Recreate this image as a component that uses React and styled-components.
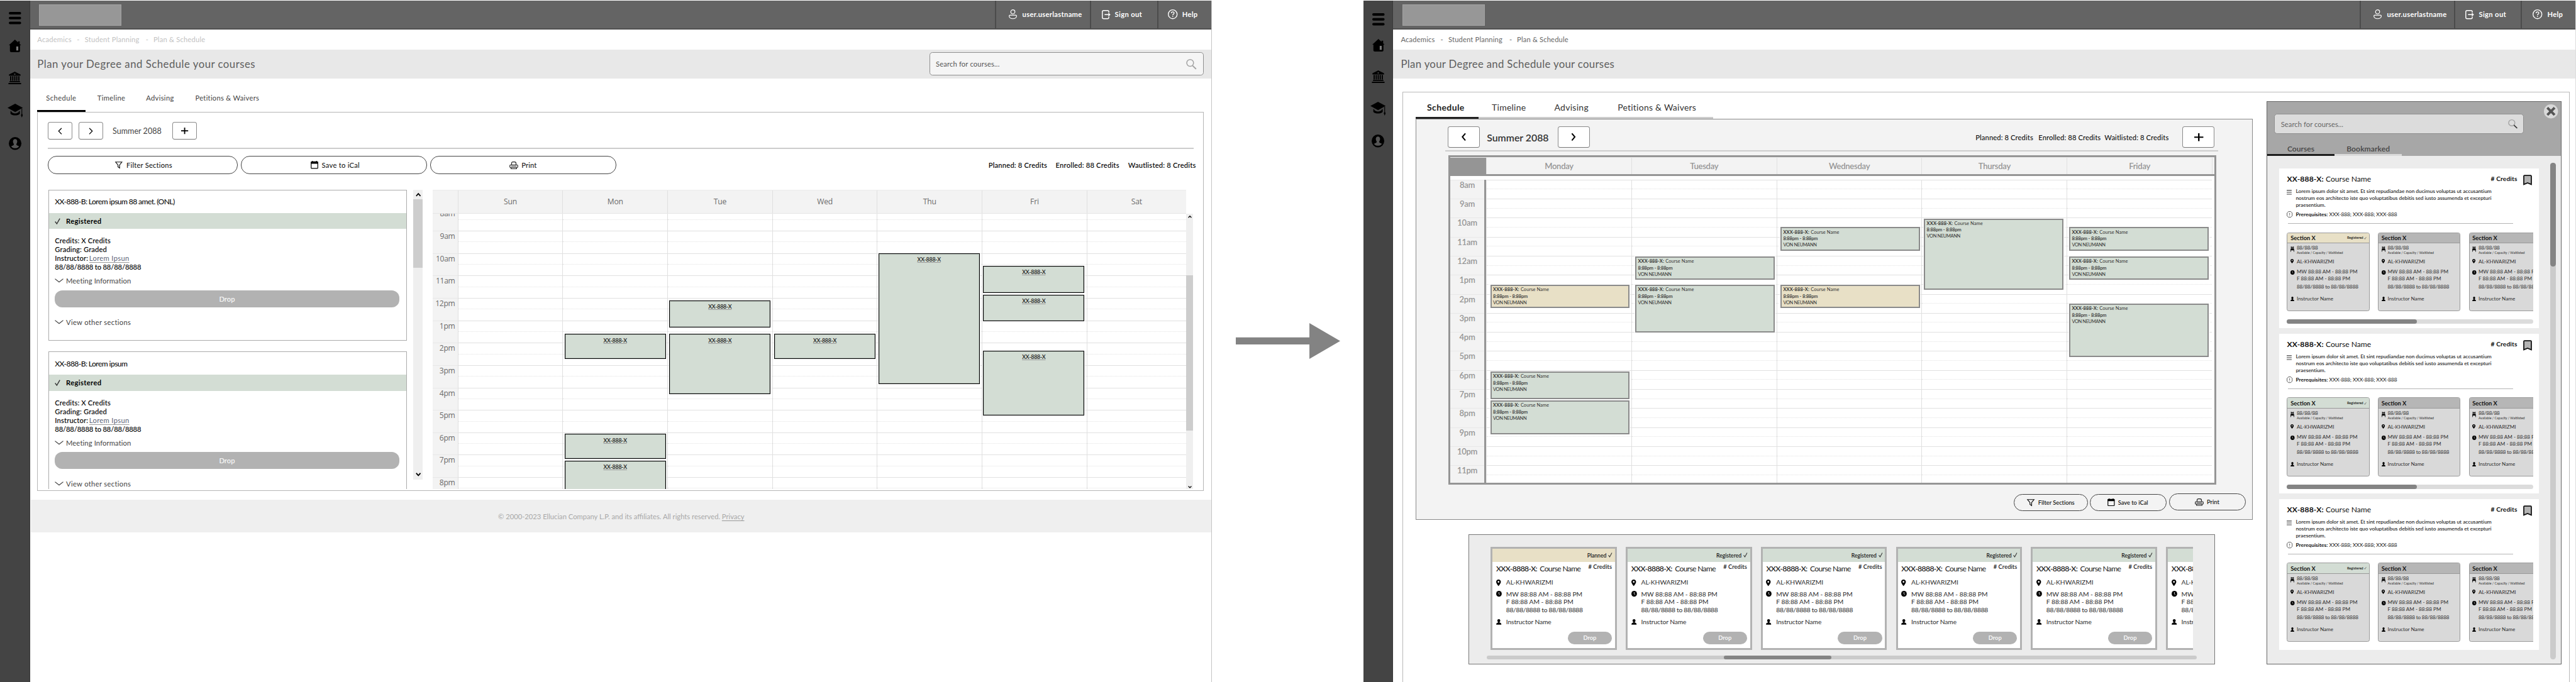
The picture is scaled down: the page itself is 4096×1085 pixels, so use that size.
import React from 'react';
import styled, { createGlobalStyle, css } from 'styled-components';

/* 10 design pixels = 1rem; the board is 439.2rem wide and always fills the window. */
const GlobalStyle = createGlobalStyle`
  *, *::before, *::after { box-sizing: border-box; }
  html { font-size: calc(100vw / 439.2); }
  body { margin: 0; background: #fff; overflow: hidden; }
`;

const sans = 'Lato, "Open Sans", sans-serif';
const calendarSans = '"Open Sans", "Noto Sans", sans-serif';
const green = '#d3ddd4';
const sand = '#e8e0c6';

/* ---------- shared pieces ---------- */

const Board = styled.div`
  display: flex;
  width: 439.2rem;
  height: 116.3rem;
  padding-top: 0.1rem;
  overflow: hidden;
  font-family: ${sans};
  color: #222;
`;

const Text = styled.span`
  flex: none;
  display: block;
  white-space: nowrap;
  font-size: ${(p) => p.$size / 10}rem;
  font-weight: ${(p) => p.$weight || 400};
  color: ${(p) => p.$color || 'inherit'};
  letter-spacing: ${(p) => p.$track || 0}em;
  ${(p) => p.$line && css`line-height: ${p.$line / 10}rem;`}
  ${(p) => p.$gap && css`margin-left: ${p.$gap / 10}rem;`}
  ${(p) => p.$width && css`width: ${p.$width / 10}rem;`}
  ${(p) => p.$underline && css`text-decoration: underline; text-decoration-color: #999; text-underline-offset: 0.15em; text-decoration-thickness: 1px;`}
`;

const CalendarText = styled(Text)`
  font-family: ${calendarSans};
`;

const CornerText = styled(Text)`
  align-self: flex-start;
  margin-left: auto;
`;

const Svg = styled.svg`
  flex: none;
  display: block;
  width: ${(p) => p.$w / 10}rem;
  height: ${(p) => p.$h / 10}rem;
  margin-left: ${(p) => (p.$gap || 0) / 10}rem;
  margin-top: ${(p) => (p.$drop || 0) / 10}rem;
  overflow: visible;
`;

const glyphs = {
  menu: ['0 0 22 22', <g fill="#000"><rect width="22" height="4.6" rx="2.3" /><rect y="8.7" width="22" height="4.6" rx="2.3" /><rect y="17.4" width="22" height="4.6" rx="2.3" /></g>],
  home: ['0 0 22 22', <g fill="#000"><path d="M11 0 0 10h2v9.5C2 21 3 22 4.5 22h13c1.5 0 2.5-1 2.5-2.5V10h2l-2.500-2.300V3h-3v2Z" /><rect x="13.300" y="12" width="3.600" height="7" fill="#777" /></g>],
  bank: ['0 0 24 22', <g fill="#000"><path fillRule="evenodd" d="M12 0 1.500 5v2h21V5ZM12 3a1.300 1.300 0 1 1 0 2.600A1.300 1.300 0 0 1 12 3Z" /><path d="M3.500 8h2.200v8H3.500zM7.200 8h2.200v8H7.200zM10.900 8h2.200v8h-2.200zM14.600 8h2.200v8h-2.200zM18.300 8h2.200v8h-2.200zM2.500 16.500h19v2h-19zM.5 19.800h23V22H.5z" /></g>],
  cap: ['0 0 26 24', <g fill="#000"><path d="M13 0 0 7l13 7.500L26 7Z" /><path d="M5 12.500v5c3.500 3.800 12.500 3.800 16 0v-5l-1.500.9c-1.500 4.600-11.500 4.600-13 0Z" /><path d="M23.800 8.500h1.200v9l1 2.500-1.600 4-1.600-4 1-2.500Z" /></g>],
  profile: ['0 0 22 22', <g><circle cx="11" cy="11" r="11" fill="#000" /><path d="M11 3.500c2.500 0 3.900 1.900 3.700 4.400-.1 2-.9 3-1.400 3.900-.4 1 .1 1.900 1 2.300 1.600.6 3 .9 3.500 1.900-1.700 2-4 3.100-6.800 3.100s-5.100-1.100-6.800-3.100c.5-1 1.900-1.300 3.500-1.900.9-.4 1.400-1.300 1-2.300-.5-.9-1.300-1.900-1.400-3.900C7.100 5.400 8.500 3.500 11 3.500Z" fill="#555" /></g>],
  user: ['0 0 14 17', <g fill="none" stroke="#fff" strokeWidth="1.3"><circle cx="7" cy="4.200" r="3.500" /><path d="M2.200 10h9.600c1 0 1.500.7 1.500 1.500 0 2.700-2.600 4.800-6.300 4.800S.7 14.200.7 11.500C.7 10.700 1.200 10 2.200 10Z" /></g>],
  signout: ['0 0 14 16', <g fill="none" stroke="#fff" strokeWidth="1.500"><path d="M11.500 4.500V3c0-1.300-.8-2.200-2-2.200H3C1.600.8.800 1.700.8 3v10c0 1.300.8 2.200 2.200 2.200h6.500c1.200 0 2-.9 2-2.200v-1.500M4.500 8h8.700M10.800 5.400 13.200 8l-2.400 2.600" /></g>],
  help: ['0 0 16 16', <g fill="none" stroke="#fff" strokeWidth="1.400"><circle cx="8" cy="8" r="7.300" /><path d="M5.800 6.300C5.800 5 6.700 4 8 4s2.300.9 2.300 2.100C10.300 7.700 8 7.700 8 9.600M8 11v1.500" /></g>],
  search: ['0 0 16 16', <g fill="none" strokeWidth="1.500"><circle cx="6.300" cy="6" r="5.300" stroke="#a3a3a3" /><path d="m10 10.200 5.500 5.300" stroke="currentColor" strokeWidth="1.900" /></g>],
  funnel: ['0 0 14 14', <path d="M1 1h12L8.600 6.800V13L5.500 10.500V6.800Z" fill="none" stroke="#111" strokeWidth="1.400" />],
  calendar: ['0 0 14 14', <g><rect x=".9" y="1.600" width="12.200" height="11.700" rx="1" fill="none" stroke="#000" strokeWidth="1.400" /><path d="M.5 1.500h2V0H4v1.500h6V0h1.500v1.500h2V5H.5Z" fill="#000" /></g>],
  printer: ['0 0 16 15', <g fill="none" stroke="#222" strokeWidth="1.300"><path d="M4 6.500V3.500C4 1.600 5 .8 6.500.8h3c1.500 0 2.500.8 2.500 2.700v3" /><path d="M2.300 6.500h11.400c.9 0 1.500.6 1.500 1.500v2.500c0 .8-.5 1.200-1.200 1.200H2c-.7 0-1.200-.4-1.200-1.200V8c0-.9.600-1.500 1.500-1.500ZM3 9h10M3 11.700v2.500h10v-2.500" /></g>],
  left: ['0 0 8 14', <path d="M6.800 1 1.500 7l5.300 6" fill="none" stroke="#000" strokeWidth="1.600" />],
  right: ['0 0 8 14', <path d="m1.200 1 5.300 6-5.300 6" fill="none" stroke="#000" strokeWidth="1.600" />],
  leftBold: ['0 0 9 13', <path d="m7 1-4.500 5.500L7 12" fill="none" stroke="#000" strokeWidth="2.200" strokeLinecap="round" />],
  rightBold: ['0 0 9 13', <path d="m2 1 4.500 5.500L2 12" fill="none" stroke="#000" strokeWidth="2.200" strokeLinecap="round" />],
  plus: ['0 0 14 14', <path d="M7 0v14M0 7h14" stroke="#000" strokeWidth="2.300" />],
  chevron: ['0 0 15 8', <path d="m.5.7 7 6.300 7-6.300" fill="none" stroke="#444" strokeWidth="1.400" />],
  check: ['0 0 10 11', <path d="m.8 6.200 3 4L9.200.6" fill="none" stroke="#333" strokeWidth="1.600" />],
  up: ['0 0 10 6', <path d="m1 5.200 4-4 4 4" fill="none" stroke="#000" strokeWidth="2" />],
  down: ['0 0 10 6', <path d="m1 .8 4 4 4-4" fill="none" stroke="#000" strokeWidth="2" />],
  pin: ['0 0 8 11', <path fillRule="evenodd" d="M4 0C1.700 0 0 1.700 0 3.900 0 6.500 4 11 4 11s4-4.500 4-7.100C8 1.700 6.300 0 4 0Zm0 2.400a1.500 1.500 0 1 1 0 3 1.500 1.500 0 0 1 0-3Z" fill="#000" />],
  clock: ['0 0 10 10', <g><circle cx="5" cy="5" r="5" fill="#000" /><path d="M5 2.200v3l1.600 1.700" fill="none" stroke="#eee" strokeWidth="1" /></g>],
  person: ['0 0 10 10', <g fill="#000"><circle cx="5" cy="2.900" r="2.800" /><path d="M3.800 5h2.400l.3 1.300c2 .3 3.200 1 3.400 3.700H.1C.3 7.300 1.500 6.600 3.500 6.300Z" /></g>],
  chair: ['0 0 7 9', <path d="M.8 0h1v.7h3.400V0h1v4.600H7v4.400H6V6.800H1V9H0V4.600h.8ZM1.800 2.300v1h3.400v-1Z" fill="#111" fillRule="evenodd" />],
  bookmark: ['0 0 15 18', <path d="M2.300 1.100h10.400c.7 0 1.200.5 1.200 1.200v14.200L7.500 13.800 1.100 16.500V2.300c0-.7.5-1.200 1.200-1.200Z" fill="#b3b3b3" stroke="#111" strokeWidth="1.900" />],
  list: ['0 0 9 9', <path d="M0 1h9M0 4.500h9M0 8h9" stroke="#444" strokeWidth="1.200" />],
  alert: ['0 0 10 11', <g fill="none" stroke="#444" strokeWidth=".9"><path d="M3.300.6h3.400L9.400 3v5L6.700 10.400H3.300L.6 8V3Z" /><path d="M5 3v3.300M5 7.300v1" /></g>],
  close: ['0 0 24 24', <g><circle cx="12" cy="12" r="12" fill="#d9d9d9" /><path d="m5.800 5.800 12.400 12.400M18.200 5.800 5.800 18.200" stroke="#555" strokeWidth="4.200" /></g>],
  arrow: ['0 0 178 61', <path d="M0 24.500h125.500V0L178 30.500 125.500 61V36.500H0Z" fill="#838383" />],
};

const Icon = ({ name, w, h, gap, drop }) => {
  const [box, art] = glyphs[name];
  return <Svg viewBox={box} preserveAspectRatio="none" $w={w} $h={h} $gap={gap} $drop={drop}>{art}</Svg>;
};

const ArrowLane = styled.div`
  flex: none;
  width: 25.85rem;
  padding: 55.05rem 0 0 4rem;
`;

/* ---------- window chrome ---------- */

const Window = styled.section`
  flex: none;
  display: flex;
  width: ${(p) => p.$width / 10}rem;
  height: 116.2rem;
  border-right: 1px solid ${(p) => p.$edge};
`;

const Sidebar = styled.nav`
  flex: none;
  display: flex;
  flex-direction: column;
  align-items: center;
  width: ${(p) => p.$width / 10}rem;
  background: #444;
  border-right: 1px solid #3a3a3a;
`;

const SideSlot = styled.div`
  display: flex;
  align-items: center;
  height: 2.2rem;
  margin-top: ${(p) => p.$gap / 10}rem;
`;

const Main = styled.div`
  flex: 1;
  min-width: 0;
  display: flex;
  flex-direction: column;
`;

const TopBar = styled.header`
  flex: none;
  display: flex;
  justify-content: space-between;
  height: 4.9rem;
  background: #646464;
  border-bottom: 2px solid #505050;
`;

const Logo = styled.div`
  width: 14.1rem;
  height: 3.7rem;
  margin: 0.6rem 0 0 ${(p) => p.$left / 10}rem;
  background: #979797;
  border: 1px solid #a2a2a2;
`;

const Account = styled.div`
  display: flex;
`;

const AccountItem = styled.div`
  display: flex;
  align-items: center;
  width: ${(p) => p.$width / 10}rem;
  padding-left: ${(p) => p.$pad / 10}rem;
  border-left: 2px solid #4b4b4b;
  color: #fff;
`;

const Crumbs = styled.div`
  flex: none;
  display: flex;
  align-items: center;
  height: 3.47rem;
  padding-left: ${(p) => p.$pad / 10}rem;
  color: ${(p) => p.$color};
`;

const TitleBand = styled.div`
  flex: none;
  display: flex;
  align-items: center;
  justify-content: space-between;
  height: 4.9rem;
  padding: 0 1.35rem 0 ${(p) => p.$pad / 10}rem;
  background: #e8e8e8;
  color: #5e5e5e;
`;

const SearchField = styled.div`
  display: flex;
  align-items: center;
  justify-content: space-between;
  width: ${(p) => p.$width / 10}rem;
  height: ${(p) => p.$height / 10}rem;
  padding: 0 ${(p) => p.$padRight / 10}rem 0 1rem;
  background: ${(p) => p.$bg};
  border: 1px solid #8f8f8f;
  border-radius: 0.5rem;
  color: #555;
`;

const SearchTint = styled.span`
  color: ${(p) => (p.$dark ? '#333' : '#a3a3a3')};
`;

const NavButton = styled.button`
  flex: none;
  display: flex;
  align-items: center;
  justify-content: center;
  width: ${(p) => p.$width / 10}rem;
  height: ${(p) => p.$height / 10}rem;
  margin: 0 0 0 ${(p) => (p.$gap || 0) / 10}rem;
  padding: 0;
  background: #fff;
  border: 1px solid #8a8a8a;
  border-bottom-color: #777;
  border-radius: 0.4rem;
`;

const Pill = styled.button`
  flex: none;
  display: flex;
  align-items: center;
  width: ${(p) => p.$width / 10}rem;
  height: ${(p) => p.$height / 10}rem;
  margin: ${(p) => (p.$lift ? '-0.1rem' : 0)} 0 0 ${(p) => (p.$gap || 0) / 10}rem;
  padding: 0 0 0 ${(p) => p.$pad / 10}rem;
  background: transparent;
  border: 1px solid #444;
  border-radius: 1.5rem;
  font-family: inherit;
  color: #222;
`;

const DropButton = styled.button`
  display: flex;
  align-items: center;
  justify-content: center;
  width: ${(p) => p.$width / 10}rem;
  height: ${(p) => p.$height / 10}rem;
  margin: 0;
  padding: 0;
  background: #b2b2b2;
  border: 0;
  border-radius: 1.3rem;
  font-family: inherit;
  color: #f6f6f6;
`;

const Chrome = ({ wide, children }) => {
  const v = wide
    ? { edge: '#ddd', width: 2067.2, side: 50.5, logo: 15.5, pad: 13, crumb: '#666', crumbTrack: 0.014, title: 0.019, gaps: [20.5, 22.5, 32, 33, 33], acct: [[161, 21.5, 9.5], [114.5, 17, 9], [93, 17.5, 9]] }
    : { edge: '#c4c4c4', width: 2066.5, side: 52, logo: 14.3, pad: 11.6, crumb: '#c2c2c2', crumbTrack: 0.019, title: 0.029, gaps: [19, 25.5, 32.5, 34, 34], acct: [[162, 21.5, 9], [114, 18.5, 7], [93, 16.5, 8]] };
  const t = v.crumbTrack;
  return (
    <Window $edge={v.edge} $width={v.width}>
      <Sidebar $width={v.side}>
        <SideSlot $gap={v.gaps[0]}><Icon name="menu" w={21} h={21} /></SideSlot>
        <SideSlot $gap={v.gaps[1]}><Icon name="home" w={21} h={21.5} /></SideSlot>
        <SideSlot $gap={v.gaps[2]}><Icon name="bank" w={22.5} h={21.5} /></SideSlot>
        <SideSlot $gap={v.gaps[3]}><Icon name="cap" w={26} h={23.5} /></SideSlot>
        <SideSlot $gap={v.gaps[4]}><Icon name="profile" w={21.5} h={22} /></SideSlot>
      </Sidebar>
      <Main>
        <TopBar>
          <Logo $left={v.logo} />
          <Account>
            <AccountItem $width={v.acct[0][0]} $pad={v.acct[0][1]}>
              <Icon name="user" w={14} h={16.5} />
              <Text $size={12} $weight={700} $gap={v.acct[0][2]} $track={0.027}>user.userlastname</Text>
            </AccountItem>
            <AccountItem $width={v.acct[1][0]} $pad={v.acct[1][1]}>
              <Icon name="signout" w={14.5} h={15.5} />
              <Text $size={12} $weight={700} $gap={v.acct[1][2]} $track={0.032}>Sign out</Text>
            </AccountItem>
            <AccountItem $width={v.acct[2][0]} $pad={v.acct[2][1]}>
              <Icon name="help" w={16.5} h={16.5} />
              <Text $size={12} $weight={700} $gap={v.acct[2][2]} $track={0.025}>Help</Text>
            </AccountItem>
          </Account>
        </TopBar>
        <Crumbs $pad={v.pad} $color={v.crumb}>
          <Text $size={12} $width={67.5} $track={t}>Academics</Text>
          <Text $size={12} $width={13.5}>-</Text>
          <Text $size={12} $width={104} $track={t}>Student Planning</Text>
          <Text $size={12} $width={13}>-</Text>
          <Text $size={12} $track={t}>Plan &amp; Schedule</Text>
        </Crumbs>
        <TitleBand $pad={v.pad}>
          <Text $size={18} $track={v.title}>Plan your Degree and Schedule your courses</Text>
          {!wide && (
            <SearchField $width={467.5} $height={39.5} $padRight={11} $bg="#f5f5f5">
              <Text $size={12} $track={0.015}>Search for courses...</Text>
              <SearchTint><Icon name="search" w={17.5} h={17.5} /></SearchTint>
            </SearchField>
          )}
        </TitleBand>
        {children}
      </Main>
    </Window>
  );
};

/* ---------- tabs ---------- */

const Tabs = styled.div`
  flex: none;
  display: flex;
  margin: ${(p) => p.$margin};
`;

const Tab = styled.div`
  display: flex;
  flex: none;
  align-items: center;
  width: ${(p) => p.$width / 10}rem;
  height: ${(p) => p.$height / 10}rem;
  padding-left: ${(p) => p.$pad / 10}rem;
  border-bottom: 0.33rem solid ${(p) => p.$bar || 'transparent'};
  color: ${(p) => p.$color};
`;

/* ---------- calendar ---------- */

const HourCell = styled.div`
  flex: none;
  height: ${(p) => p.$height / 10}rem;
  border-top: 1px solid #e1e1e1;
  &::before {
    content: '';
    display: block;
    height: 50%;
    border-bottom: 1px dotted #e3e3e3;
  }
`;

const TimeCell = styled(HourCell)`
  &::before { height: 0; border: 0; }
  text-align: ${(p) => (p.$open ? 'right' : 'center')};
  padding-right: ${(p) => (p.$open ? '0.45rem' : 0)};
  border-top-color: #e8e8e8;
`;

const TimeColumn = styled.div`
  flex: none;
  display: flex;
  flex-direction: column;
  width: ${(p) => p.$width / 10}rem;
  background: #f3f3f3;
  ${(p) => p.$bar && css`border-right: 3px solid #959595;`}
`;

const DayColumn = styled.div`
  position: relative;
  display: flex;
  flex-direction: column;
  flex: ${(p) => (p.$width ? 'none' : 1)};
  ${(p) => p.$width && css`width: ${p.$width / 10}rem;`}
  border-left: 1px solid ${(p) => (p.$first ? '#ececec' : '#e0e0e0')};
`;

const ClipBody = styled.div`
  display: flex;
  height: ${(p) => p.$height / 10}rem;
  overflow: hidden;
`;

const GridRows = styled.div`
  display: flex;
  flex: ${(p) => (p.$grow ? 1 : 'none')};
  align-items: flex-start;
  margin-top: ${(p) => p.$shift / 10}rem;
`;

const DayHeads = styled.div`
  display: flex;
  flex: none;
  height: ${(p) => p.$height / 10}rem;
  width: ${(p) => (p.$width ? `${p.$width / 10}rem` : 'auto')};
  background: #f3f3f3;
  border-top: 1px solid #ececec;
  border-bottom: ${(p) => (p.$heavy ? '3px solid #959595' : '1px solid #e6e6e6')};
`;

const DayHead = styled.div`
  display: flex;
  align-items: center;
  justify-content: center;
  flex: ${(p) => (p.$width ? 'none' : 1)};
  ${(p) => p.$width && css`width: ${p.$width / 10}rem;`}
  border-left: 1px solid #e0e0e0;
`;

const HeadCorner = styled.div`
  flex: none;
  width: ${(p) => p.$width / 10}rem;
  background: ${(p) => (p.$dark ? '#959595' : 'transparent')};
`;

const EventBox = styled.div`
  position: absolute;
  left: ${(p) => p.$left / 10}rem;
  width: ${(p) => p.$width / 10}rem;
  display: flex;
  flex-direction: column;
  background: ${(p) => p.$bg || green};
`;

const SimpleEvent = styled(EventBox)`
  align-items: center;
  padding-top: 0.35rem;
  border: 1px solid #000;
  outline: 1px solid #fff;
  box-shadow: inset 0 0 0 1px #b4bdb6;
`;

const CourseEvent = styled(EventBox)`
  padding: 0.13rem 0 0 0.25rem;
  border: 2px solid #8a8a8a;
  outline: 1px solid #fff;
  color: #333;
`;

const Inline = styled.div`
  display: flex;
  align-items: center;
`;

const span = (origin, [top, bottom]) => ({ top: `${(top - origin) / 10}rem`, height: `${(bottom - top) / 10}rem` });

const ScrollRail = styled.div`
  flex: none;
  display: flex;
  flex-direction: column;
  align-items: center;
  width: ${(p) => p.$width / 10}rem;
  height: ${(p) => p.$height / 10}rem;
  margin-left: ${(p) => (p.$gap || 0) / 10}rem;
  background: #efefef;
`;

const ScrollEnd = styled.div`
  display: flex;
  align-items: center;
  justify-content: center;
  width: 100%;
  height: ${(p) => p.$height / 10}rem;
`;

const ScrollThumb = styled.div`
  width: 100%;
  height: ${(p) => p.$height / 10}rem;
  margin: ${(p) => (p.$top || 0) / 10}rem 0 auto;
  background: #cdcdcd;
`;

/* ---------- first window ---------- */

const CurrentPanel = styled.div`
  flex: none;
  display: flex;
  flex-direction: column;
  width: 198.9rem;
  height: 64.75rem;
  margin-left: 1.15rem;
  padding: 1.7rem 0 0 1.65rem;
  border: 1px solid #b5b5b5;
`;

const Row = styled.div`
  flex: none;
  display: flex;
  align-items: center;
  height: ${(p) => p.$height / 10}rem;
  margin-top: ${(p) => (p.$top || 0) / 10}rem;
  width: ${(p) => (p.$width ? `${p.$width / 10}rem` : 'auto')};
`;

const Rule = styled.div`
  flex: none;
  width: ${(p) => p.$width / 10}rem;
  height: ${(p) => (p.$thin ? '1px' : '2px')};
  margin: ${(p) => p.$top / 10}rem 0 0 ${(p) => (p.$left || 0) / 10}rem;
  background: ${(p) => p.$color || '#cdcdcd'};
`;

const Credits = styled.div`
  display: flex;
  align-items: center;
  margin-left: auto;
  color: #111;
`;

const CurrentBody = styled.div`
  display: flex;
  align-items: flex-start;
  height: 51.1rem;
  margin-top: 2.65rem;
  overflow: hidden;
`;

const SectionList = styled.div`
  flex: none;
  display: flex;
  flex-direction: column;
  gap: 1.8rem;
  width: 61.2rem;
  margin-left: 0.1rem;
`;

const SectionItem = styled.article`
  display: flex;
  flex-direction: column;
  height: 25.8rem;
  border: 1px solid #ababab;
`;

const SectionTitle = styled.h3`
  display: flex;
  align-items: center;
  height: 3.9rem;
  margin: 0;
  padding-left: 1.05rem;
  font-size: 1.3rem;
  color: #111;
`;

const StatusStrip = styled.div`
  display: flex;
  align-items: center;
  height: 2.7rem;
  padding-left: 1.05rem;
  background: ${green};
  color: #000;
`;

const SectionFacts = styled.div`
  padding: 1.3rem 0 0 1.05rem;
  color: #111;
`;

const Calendar = styled.div`
  flex: none;
  display: flex;
  flex-direction: column;
  width: 129.7rem;
  margin-left: 1.7rem;
`;

const Footer = styled.footer`
  flex: none;
  display: flex;
  align-items: center;
  justify-content: center;
  height: 5.5rem;
  margin: 1.5rem 0 0 0.1rem;
  background: #efefef;
  color: #a8a8a8;
`;

const weekEvents = [
  [],
  [[570.6, 613.3], [741, 784], [787, 860]],
  [[513.2, 559.6], [570.6, 673]],
  [[570.6, 613.3]],
  [[433, 656.3]],
  [[454.2, 500], [503.3, 548.5], [599, 709.3]],
  [],
];
const weekDays = ['Sun', 'Mon', 'Tue', 'Wed', 'Thu', 'Fri', 'Sat'];
const weekHours = ['8am', '9am', '10am', '11am', '12pm', '1pm', '2pm', '3pm', '4pm', '5pm', '6pm', '7pm', '8pm'];

const SectionEntry = ({ title }) => (
  <SectionItem>
    <SectionTitle><Text $size={13} $weight={500} $track={-0.05}>{title}</Text></SectionTitle>
    <StatusStrip>
      <Icon name="check" w={9.5} h={10.5} />
      <Text $size={12} $weight={700} $gap={9.5} $track={0.032}>Registered</Text>
    </StatusStrip>
    <SectionFacts>
      <Text $size={12} $weight={600} $line={15} $track={0.011}>Credits: X Credits</Text>
      <Text $size={12} $weight={600} $line={15} $track={0.011}>Grading: Graded</Text>
      <Inline>
        <Text $size={12} $weight={600} $line={15} $width={58.5} $track={0.011}>Instructor:</Text>
        <Text $size={12} $line={15} $color="#5d6577" $track={0.03} $underline>Lorem Ipsun</Text>
      </Inline>
      <Text $size={12} $weight={600} $line={15} $track={-0.0125}>88/88/8888 to 88/88/8888</Text>
      <Row $height={18} $top={6.5}>
        <Icon name="chevron" w={15} h={7} />
        <Text $size={12} $gap={4} $color="#444" $track={0.012}>Meeting Information</Text>
      </Row>
      <Row $height={29} $top={7.5}><DropButton $width={587} $height={29}><Text $size={12} $weight={600}>Drop</Text></DropButton></Row>
      <Row $height={18} $top={16}>
        <Icon name="chevron" w={15} h={7} />
        <Text $size={12} $gap={4} $color="#444" $track={0.03}>View other sections</Text>
      </Row>
    </SectionFacts>
  </SectionItem>
);

const CurrentPlanner = () => (
  <Chrome>
    <Tabs $margin="1.33rem 0 0 1.15rem">
      <Tab $width={82.5} $height={43.5} $pad={15} $bar="#000" $color="#444"><Text $size={12} $track={0.04}>Schedule</Text></Tab>
      <Tab $width={83} $height={43.5} $pad={20} $color="#444"><Text $size={12} $track={0.03}>Timeline</Text></Tab>
      <Tab $width={84} $height={43.5} $pad={20} $color="#444"><Text $size={12} $track={0.03}>Advising</Text></Tab>
      <Tab $width={140} $height={43.5} $pad={20} $color="#444"><Text $size={12} $track={0.025}>Petitions &amp; Waivers</Text></Tab>
    </Tabs>
    <CurrentPanel>
      <Row $height={30}>
        <NavButton $width={42} $height={30}><Icon name="left" w={7.5} h={12} /></NavButton>
        <NavButton $width={42} $height={30} $gap={10.5}><Icon name="right" w={7.5} h={12} /></NavButton>
        <Text $size={13.5} $gap={16.5} $width={102} $line={34} $color="#444">Summer 2088</Text>
        <NavButton $width={42} $height={30}><Icon name="plus" w={12} h={11} /></NavButton>
      </Row>
      <Rule $width={1954} $top={13.5} />
      <Row $height={30.5} $top={12.3} $width={1958}>
        <Pill $width={324} $height={30.5} $pad={114.5}><Icon name="funnel" w={12.5} h={12} /><Text $size={12} $weight={500} $gap={6.5} $track={0.016}>Filter Sections</Text></Pill>
        <Pill $width={317.5} $height={30.5} $gap={5.5} $pad={118}><Icon name="calendar" w={13} h={13.5} /><Text $size={12} $weight={500} $gap={6} $track={0.022}>Save to iCal</Text></Pill>
        <Pill $width={317.5} $height={30.5} $gap={5.5} $pad={134}><Icon name="printer" w={15} h={13} /><Text $size={12} $weight={500} $gap={5.5} $track={0.01}>Print</Text></Pill>
        <Credits>
          <Text $size={12} $weight={600} $track={0.016}>Planned: 8 Credits</Text>
          <Text $size={12} $weight={600} $gap={14.5} $track={0.017}>Enrolled: 88 Credits</Text>
          <Text $size={12} $weight={600} $gap={15} $track={0.017}>Wautlisted: 8 Credits</Text>
        </Credits>
      </Row>
      <CurrentBody>
        <SectionList>
          <SectionEntry title="XX-888-B: Lorem ipsum 88 amet. (ONL)" />
          <SectionEntry title="XX-888-B: Lorem ipsum" />
        </SectionList>
        <ScrollRail $width={16.5} $height={494.5} $gap={10.5}>
          <ScrollEnd $height={16.5}><Icon name="up" w={9} h={6} /></ScrollEnd>
          <ScrollThumb $height={116.5} />
          <ScrollEnd $height={16.5}><Icon name="down" w={9} h={6} /></ScrollEnd>
        </ScrollRail>
        <Calendar>
          <DayHeads $height={40.8} $width={1284.5}>
            <HeadCorner $width={42.3} />
            {weekDays.map((d, i) => (
              <DayHead key={d} $width={i === 6 ? 169.6 : 178.75}>
                <CalendarText $size={13} $color="#6b6b6b" $track={-0.015}>{d}</CalendarText>
              </DayHead>
            ))}
          </DayHeads>
          <ClipBody $height={471}>
            <GridRows $shift={-9}>
              <TimeColumn $width={42.3}>
                {weekHours.map((h) => (
                  <TimeCell key={h} $height={38.24} $open><CalendarText $size={13} $line={18} $color="#6b6b6b" $track={-0.025}>{h}</CalendarText></TimeCell>
                ))}
              </TimeColumn>
              {weekEvents.map((list, day) => (
                <DayColumn key={day} $width={day === 6 ? 169.6 : 178.75}>
                  {weekHours.map((h) => <HourCell key={h} $height={38.24} />)}
                  {list.map((e) => (
                    <SimpleEvent key={e[0]} $left={day < 4 ? 2.5 : 1.4} $width={172.5} style={span(356, e)}>
                      <Text $size={9.5} $weight={600} $line={13} $track={-0.026} $underline>XX-888-X</Text>
                    </SimpleEvent>
                  ))}
                </DayColumn>
              ))}
            </GridRows>
            <ScrollRail $width={12} $height={471}>
              <ScrollEnd $height={11}><Icon name="up" w={6.5} h={4} /></ScrollEnd>
              <ScrollThumb $height={265} $top={94.5} />
              <ScrollEnd $height={8}><Icon name="down" w={6.5} h={4} /></ScrollEnd>
            </ScrollRail>
          </ClipBody>
        </Calendar>
      </CurrentBody>
    </CurrentPanel>
    <Footer>
      <Text $size={12}>© 2000-2023 Ellucian Company L.P. and its affiliates. All rights reserved.</Text>
      <Text $size={12} $gap={3} $underline>Privacy</Text>
    </Footer>
  </Chrome>
);

/* ---------- second window ---------- */

const Workspace = styled.div`
  flex: 1;
  display: flex;
  align-items: flex-start;
  width: 198.95rem;
  margin: 2.26rem 0 0 1.6rem;
  padding-left: 2.15rem;
  border: 1px solid #b9b9b9;
  border-bottom: 0;
`;

const PlannerColumn = styled.div`
  flex: none;
  display: flex;
  flex-direction: column;
  width: 142.7rem;
`;

const PlannerPanel = styled.div`
  flex: none;
  display: flex;
  flex-direction: column;
  height: 68.4rem;
  padding: 1.22rem 0 0 5.3rem;
  background: #f3f3f3;
  border: 1px solid #8a8a8a;
`;

const PlannerCalendar = styled.div`
  flex: none;
  display: flex;
  flex-direction: column;
  width: 130.9rem;
  height: 56.2rem;
  margin: 0.6rem 0 0 0.13rem;
  background: #fff;
  border: 3px solid #959595;
`;

const EdgeStrip = styled.div`
  flex: none;
  width: 0.4rem;
  border-left: 1px solid #e0e0e0;
`;

const PillRow = styled.div`
  display: flex;
  justify-content: flex-end;
  align-items: flex-start;
  margin-top: 1.6rem;
  padding-right: 1.1rem;
`;

const CourseTray = styled.div`
  flex: none;
  width: 127.2rem;
  height: 22.2rem;
  margin: 2.5rem 0 0 9rem;
  padding: 2rem 0 0 3.65rem;
  background: #ececec;
  border: 1px solid #777;
`;

const TrayStrip = styled.div`
  display: flex;
  gap: 1.53rem;
  width: 119.7rem;
  overflow: hidden;
`;

const TrayCard = styled.article`
  flex: none;
  display: flex;
  flex-direction: column;
  width: 21.5rem;
  height: 17.65rem;
  background: #fff;
  border: 3px solid #b2b2b2;
`;

const CardStatus = styled.div`
  flex: none;
  display: flex;
  align-items: center;
  justify-content: flex-end;
  height: 2.3rem;
  padding-right: 0.45rem;
  background: ${(p) => p.$bg};
`;

const CardBody = styled.div`
  display: flex;
  flex-direction: column;
  padding: ${(p) => p.$pad};
`;

const Detail = styled.div`
  display: grid;
  grid-template-columns: ${(p) => p.$col / 10}rem 1fr;
  align-items: start;
  margin-top: ${(p) => p.$top / 10}rem;
  color: #2e2e2e;
`;

const DropLine = styled.div`
  display: flex;
  justify-content: flex-end;
  margin-top: 0.95rem;
`;

const Track = styled.div`
  flex: none;
  width: ${(p) => p.$width / 10}rem;
  height: ${(p) => p.$height / 10}rem;
  margin: ${(p) => p.$margin};
  background: ${(p) => p.$color || '#cbcbcb'};
  border-radius: 0.45rem;
`;

const TrackThumb = styled.div`
  width: ${(p) => (p.$width ? `${p.$width / 10}rem` : '100%')};
  height: ${(p) => (p.$height ? `${p.$height / 10}rem` : '100%')};
  margin-left: ${(p) => (p.$left || 0) / 10}rem;
  background: #848484;
  border-radius: 0.45rem;
`;

const Drawer = styled.aside`
  flex: none;
  display: flex;
  flex-direction: column;
  width: 50.3rem;
  height: 96.05rem;
  margin: 1.55rem 0 0 2.37rem;
  background: #ececec;
  border: 1px solid #666;
`;

const DrawerHead = styled.div`
  flex: none;
  display: flex;
  flex-direction: column;
  height: 9.2rem;
  background: #a7a7a7;
`;

const DrawerSearch = styled.div`
  display: flex;
  align-items: flex-start;
  justify-content: space-between;
  height: 7.05rem;
  padding: 0.45rem 0.55rem 0 1.2rem;
`;

const SearchSlot = styled.div`
  padding-top: 1.6rem;
`;

const DrawerTabs = styled.div`
  display: flex;
`;

const DrawerBody = styled.div`
  display: flex;
  align-items: flex-start;
`;

const ResultList = styled.div`
  display: flex;
  flex-direction: column;
  gap: 1rem;
  margin: 2.2rem 0 0 2.05rem;
`;

const Result = styled.article`
  display: flex;
  flex-direction: column;
  width: 44.2rem;
  height: ${(p) => p.$height / 10}rem;
  padding: 1.05rem 0 0 1.3rem;
  background: #fff;
  color: #111;
`;

const ResultHead = styled.div`
  display: flex;
  align-items: flex-start;
  height: 2.2rem;
`;

const HeadRight = styled.div`
  display: flex;
  align-items: flex-start;
  margin-left: auto;
  padding-right: 1.15rem;
`;

const SectionStrip = styled.div`
  display: flex;
  gap: 1.4rem;
  width: 42rem;
  margin-top: 1.4rem;
  overflow: hidden;
`;

const SectionCard = styled.div`
  flex: none;
  width: 14.1rem;
  height: 13.5rem;
  background: #d9d9d9;
  border: 1px solid #9a9a9a;
  border-radius: 0.35rem;
  overflow: hidden;
`;

const SectionCardHead = styled.div`
  display: flex;
  align-items: center;
  justify-content: space-between;
  height: 1.8rem;
  padding: 0 0.45rem 0 0.5rem;
  background: ${(p) => p.$bg};
  border-bottom: 1px solid #999;
`;

const plannerDays = [
  ['Monday', 6, [[486.4, 526.3, 'planned'], [634.2, 681], [683.5, 741.3]]],
  ['Tuesday', 5.6, [[438, 477.7], [486.4, 567.3]]],
  ['Wednesday', 5.8, [[388, 428], [486.4, 526.3, 'planned']]],
  ['Thursday', 3, [[373.5, 495]]],
  ['Friday', 3, [[388, 428], [438, 477.7], [518.6, 609.3]]],
];
const plannerHours = ['8am', '9am', '10am', '11am', '12am', '1pm', '2pm', '3pm', '4pm', '5pm', '6pm', '7pm', '8pm', '9pm', '10pm', '11pm'];

const CourseCard = ({ planned }) => (
  <TrayCard>
    <CardStatus $bg={planned ? sand : green}>
      <Text $size={9.3} $weight={600} $track={-0.005}>{planned ? 'Planned' : 'Registered'}</Text>
      <Icon name="check" w={7} h={8} gap={3} drop={-1} />
    </CardStatus>
    <CardBody $pad="0 0.5rem 0 0.6rem">
      <Row $height={22}>
        <Text $size={13} $weight={600} $width={74.5} $track={-0.048}>XXX-8888-X:</Text>
        <Text $size={13} $track={-0.055}>Course Name</Text>
        <CornerText $size={10} $weight={600} $line={17} $track={0.007}># Credits</CornerText>
      </Row>
      <Detail $col={17} $top={6}><Icon name="pin" w={8} h={11} drop={1.5} /><Text $size={11} $line={14}>AL-KHWARIZMI</Text></Detail>
      <Detail $col={17} $top={6}>
        <Icon name="clock" w={9.5} h={10} drop={1.5} />
        <div>
          <Text $size={11} $line={13}>MW 88:88 AM - 88:88 PM</Text>
          <Text $size={11} $line={13}>F 88:88 AM - 88:88 PM</Text>
          <Text $size={11} $line={17} $track={-0.026}>88/88/8888 to 88/88/8888</Text>
        </div>
      </Detail>
      <Detail $col={17} $top={4}><Icon name="person" w={9} h={9.5} drop={2} /><Text $size={11} $line={14} $track={-0.008}>Instructor Name</Text></Detail>
      <DropLine><DropButton $width={75.5} $height={21.5}><Text $size={10} $weight={700}>Drop</Text></DropButton></DropLine>
    </CardBody>
  </TrayCard>
);

const SectionOption = ({ tone }) => (
  <SectionCard>
    <SectionCardHead $bg={tone || '#b6b6b6'}>
      <Text $size={10} $weight={700}>Section X</Text>
      {tone && <Inline><Text $size={5.9} $weight={600}>Registered</Text><Icon name="check" w={4} h={4} gap={1.5} /></Inline>}
    </SectionCardHead>
    <CardBody $pad="0.15rem 0 0 0.5rem">
      <Detail $col={10.5} $top={0}>
        <Icon name="chair" w={6.3} h={9} drop={3.5} />
        <div>
          <Text $size={8.75} $line={11} $track={-0.033}>88/88/88</Text>
          <Text $size={5.6} $line={7}>Available / Capacity / Waitlisted</Text>
        </div>
      </Detail>
      <Detail $col={10.5} $top={6}><Icon name="pin" w={5.5} h={7.5} drop={1.5} /><Text $size={8.75} $line={11}>AL-KHWARIZMI</Text></Detail>
      <Detail $col={10.5} $top={6.6}>
        <Icon name="clock" w={7} h={7.5} drop={3} />
        <div>
          <Text $size={8.75} $line={11.8}>MW 88:88 AM - 88:88 PM</Text>
          <Text $size={8.75} $line={11.8}>F 88:88 AM - 88:88 PM</Text>
          <Text $size={8.75} $line={17} $track={-0.022}>88/88/8888 to 88/88/8888</Text>
        </div>
      </Detail>
      <Detail $col={10.5} $top={5.3}><Icon name="person" w={6.5} h={7.5} drop={2} /><Text $size={8.75} $line={11}>Instructor Name</Text></Detail>
    </CardBody>
  </SectionCard>
);

const CourseResult = ({ tone, last }) => (
  <Result $height={last ? 256.5 : 272}>
    <ResultHead>
      <Text $size={13} $weight={700} $line={16} $width={66} $track={0.011}>XX-888-X:</Text>
      <Text $size={13} $line={16}>Course Name</Text>
      <HeadRight>
        <Text $size={11} $weight={700} $line={13} $track={0.01}># Credits</Text>
        <Icon name="bookmark" w={15} h={18} gap={10} />
      </HeadRight>
    </ResultHead>
    <Detail $col={15} $top={0}>
      <Icon name="list" w={8.5} h={8.5} drop={3} />
      <div>
        <Text $size={9} $weight={600} $line={11.7} $track={-0.007}>Lorem ipsum dolor sit amet. Et sint repudiandae non ducimus voluptas ut accusantium</Text>
        <Text $size={9} $weight={600} $line={11.7} $track={-0.007}>nostrum eos architecto iste quo voluptatibus debitis sed iusto assumenda et excepturi</Text>
        <Text $size={9} $weight={600} $line={11.7} $track={-0.007}>praesentium.</Text>
      </div>
    </Detail>
    <Row $height={12} $top={4.5}>
      <Icon name="alert" w={10} h={11} />
      <Text $size={9} $weight={700} $gap={5} $width={57}>Prerequisites:</Text>
      <Text $size={9} $track={-0.01}>XXX-888; XXX-888; XXX-888</Text>
    </Row>
    <Rule $thin $width={383} $top={9.2} $left={2} $color="#b5b5b5" />
    <SectionStrip>
      <SectionOption tone={tone} />
      <SectionOption />
      <SectionOption />
    </SectionStrip>
    {!last && <Track $width={420} $height={6.8} $margin="1.4rem 0 0" $color="#dcdcdc"><TrackThumb $width={221} /></Track>}
  </Result>
);

const ProposedPlanner = () => (
  <Chrome wide>
    <Workspace>
      <PlannerColumn>
        <Tabs $margin="0.82rem 0 0 -0.05rem">
          <Tab $width={107.5} $height={37} $pad={19.5} $bar="#222" $color="#222"><Text $size={15} $weight={700} $track={0.028}>Schedule</Text></Tab>
          <Tab $width={107} $height={37} $pad={22.5} $bar="#cdcdcd" $color="#333"><Text $size={15} $track={0.018}>Timeline</Text></Tab>
          <Tab $width={107.5} $height={37} $pad={22} $bar="#cdcdcd" $color="#333"><Text $size={15} $track={0.022}>Advising</Text></Tab>
          <Tab $width={185} $height={37} $pad={22.5} $bar="#cdcdcd" $color="#333"><Text $size={15} $track={0.018}>Petitions &amp; Waivers</Text></Tab>
        </Tabs>
        <PlannerPanel>
          <Row $height={36} $width={1307.5}>
            <NavButton $width={54.5} $height={36}><Icon name="leftBold" w={9} h={12.5} /></NavButton>
            <Text $size={17} $weight={600} $gap={12.5} $width={121} $color="#333">Summer 2088</Text>
            <NavButton $width={54.5} $height={36}><Icon name="rightBold" w={9} h={12.5} /></NavButton>
            <Credits>
              <Text $size={12} $weight={500} $track={0.009}>Planned: 8 Credits</Text>
              <Text $size={12} $weight={500} $gap={9} $track={0.009}>Enrolled: 88 Credits</Text>
              <Text $size={12} $weight={500} $gap={6.5} $track={0.009}>Waitlisted: 8 Credits</Text>
            </Credits>
            <NavButton $width={54.5} $height={36} $gap={23.5}><Icon name="plus" w={15.5} h={13.5} /></NavButton>
          </Row>
          <Rule $width={1317.5} $top={5} $left={-4} />
          <PlannerCalendar>
            <DayHeads $height={32} $heavy>
              <HeadCorner $width={61.3} $dark />
              {plannerDays.map(([d]) => <DayHead key={d}><Text $size={14} $weight={600} $color="#969696" $track={-0.02}>{d}</Text></DayHead>)}
              <EdgeStrip />
            </DayHeads>
            <ClipBody $height={525}>
              <GridRows $grow $shift={6.3}>
                <TimeColumn $width={61.3} $bar>
                  {plannerHours.map((h) => (
                    <TimeCell key={h} $height={32.5}><Text $size={14} $weight={600} $line={17} $color="#969696" $track={-0.02}>{h}</Text></TimeCell>
                  ))}
                </TimeColumn>
                {plannerDays.map(([d, left, events], i) => (
                  <DayColumn key={d} $first={i === 0}>
                    {plannerHours.map((h) => <HourCell key={h} $height={32.5} />)}
                    {events.map((e) => (
                      <CourseEvent key={e[0]} $left={left} $width={237.5} $bg={e[2] ? sand : green} style={span(306.8, e)}>
                        <Inline>
                          <Text $size={8} $weight={700} $line={11} $width={47} $track={0.02}>XXX-888-X:</Text>
                          <Text $size={8} $line={11} $track={0.01}>Course Name</Text>
                        </Inline>
                        <Text $size={8} $weight={600} $line={10.7} $track={-0.018}>8:88pm - 8:88pm</Text>
                        <Text $size={8} $line={10.7} $track={-0.05}>VON NEUMANN</Text>
                      </CourseEvent>
                    ))}
                  </DayColumn>
                ))}
                <EdgeStrip />
              </GridRows>
            </ClipBody>
          </PlannerCalendar>
          <PillRow>
            <Pill $width={126} $height={28.5} $pad={21.5}><Icon name="funnel" w={13} h={12} /><Text $size={10} $weight={600} $gap={6} $track={-0.005}>Filter Sections</Text></Pill>
            <Pill $width={131} $height={28.5} $gap={4} $pad={29}><Icon name="calendar" w={12.5} h={13} /><Text $size={10} $weight={600} $gap={5}>Save to iCal</Text></Pill>
            <Pill $width={130.5} $height={28.5} $gap={4} $pad={42.5} $lift><Icon name="printer" w={15} h={12.5} /><Text $size={10} $weight={600} $gap={5.5}>Print</Text></Pill>
          </PillRow>
        </PlannerPanel>
        <CourseTray>
          <TrayStrip>
            <CourseCard planned />
            <CourseCard />
            <CourseCard />
            <CourseCard />
            <CourseCard />
            <CourseCard />
          </TrayStrip>
          <Track $width={1211} $height={6.5} $margin="0.9rem 0 0 -0.7rem"><TrackThumb $width={183} $left={404.5} /></Track>
        </CourseTray>
      </PlannerColumn>
      <Drawer>
        <DrawerHead>
          <DrawerSearch>
            <SearchSlot>
              <SearchField $width={425.5} $height={34.5} $padRight={10.5} $bg="#dcdcdc">
                <Text $size={12} $color="#666" $track={0.005}>Search for courses...</Text>
                <SearchTint $dark><Icon name="search" w={16} h={15.5} /></SearchTint>
              </SearchField>
            </SearchSlot>
            <Icon name="close" w={24} h={24} />
          </DrawerSearch>
          <DrawerTabs>
            <Tab $width={115} $height={21.5} $pad={34} $bar="#1c1c1c" $color="#444"><Text $size={13} $weight={600}>Courses</Text></Tab>
            <Tab $width={114.5} $height={21.5} $pad={20} $bar="#dadada" $color="#444"><Text $size={13} $weight={600} $track={0.01}>Bookmarked</Text></Tab>
          </DrawerTabs>
        </DrawerHead>
        <DrawerBody>
          <ResultList>
            <CourseResult tone={sand} />
            <CourseResult tone={green} />
            <CourseResult tone={green} last />
          </ResultList>
          <Track $width={9} $height={847} $margin="1.2rem 0 0 2rem"><TrackThumb $height={177} /></Track>
        </DrawerBody>
      </Drawer>
    </Workspace>
  </Chrome>
);

export default function App() {
  return (
    <>
      <GlobalStyle />
      <Board>
        <CurrentPlanner />
        <ArrowLane><Icon name="arrow" w={178} h={61} /></ArrowLane>
        <ProposedPlanner />
      </Board>
    </>
  );
}
